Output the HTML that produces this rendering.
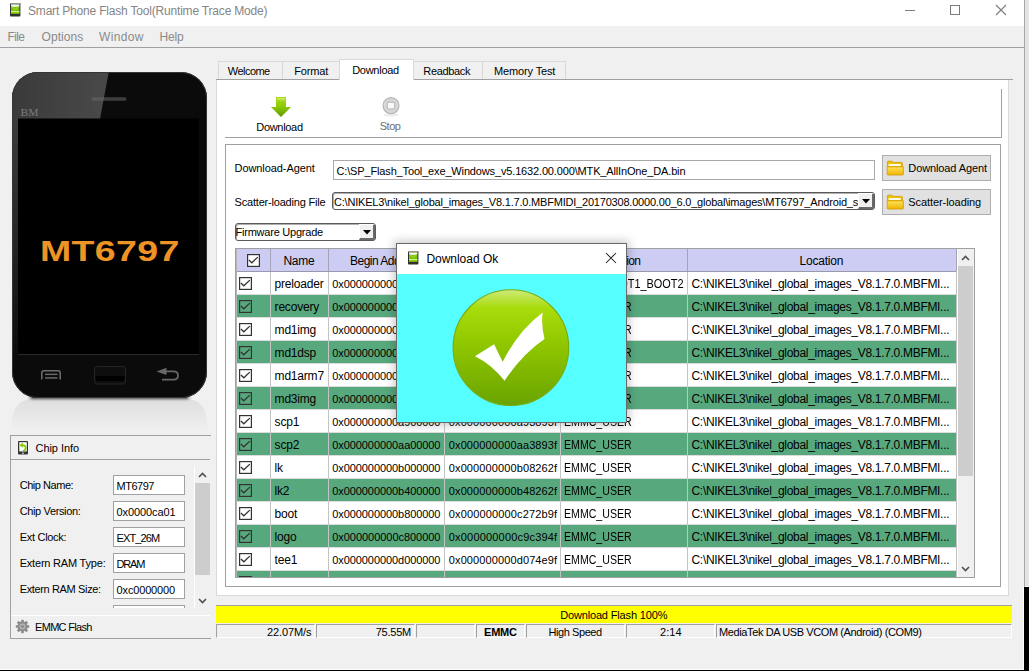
<!DOCTYPE html>
<html><head><meta charset="utf-8">
<style>
*{margin:0;padding:0;box-sizing:border-box}
html,body{width:1029px;height:671px;overflow:hidden;background:#000}
body{position:relative;font-family:"Liberation Sans",sans-serif;font-size:12px;color:#000}
.a{position:absolute}
.t{position:absolute;white-space:nowrap;line-height:14px;font-size:11px}
</style></head><body>
<div class="a" style="left:1024px;top:0px;width:1px;height:587px;background:#a8a8a8"></div>
<div class="a" style="left:1025px;top:0px;width:4px;height:586px;background:#e4e4e4"></div>
<div class="a" style="left:1025px;top:586px;width:4px;height:1px;background:#fff"></div>
<div class="a" style="left:0px;top:669px;width:1024px;height:1px;background:#fff"></div>
<div class="a" style="left:0;top:0;width:1024px;height:669px;background:#f0f0f0;overflow:hidden">
<div class="a" style="left:0px;top:0px;width:1024px;height:26px;background:#fff"></div>
<svg class="a" style="left:10px;top:3px" width="11" height="14" viewBox="0 0 11 14">
  <defs><linearGradient id="ica" x1="0" y1="0" x2="0" y2="1"><stop offset="0" stop-color="#c8c8c8"/><stop offset="1" stop-color="#3a3a3a"/></linearGradient></defs>
  <rect x="0" y="0" width="10.4" height="13.6" rx="0.8" fill="#303030"/>
  <rect x="0" y="0" width="10.4" height="1.4" fill="url(#ica)"/>
  <rect x="1" y="1.4" width="8.4" height="9.2" fill="#7cc400"/>
  <path d="M1 1.4 L9.4 1.4 L9.4 3 Q5.2 5.2 1 3 Z" fill="#f6f6f6"/>
  <path d="M1.2 3.6 L5.2 6.4 L9.2 3.6" stroke="#a6dc50" stroke-width="0.8" fill="none"/>
  <rect x="1" y="8.1" width="8.4" height="0.9" fill="#d8f0b0"/>
  <rect x="1" y="9" width="8.4" height="1.6" fill="#88d000"/>
</svg>
<div class="t" style="left:28.00px;top:4.00px;font-size:12px;letter-spacing:-0.187px;color:#858585">Smart Phone Flash Tool(Runtime Trace Mode)</div>
<div class="a" style="left:905px;top:10px;width:10px;height:1px;background:#7c7c7c"></div>
<div class="a" style="left:950px;top:5px;width:10px;height:10px;border:1px solid #7c7c7c"></div>
<svg class="a" style="left:995px;top:4px" width="12" height="12" viewBox="0 0 12 12"><path d="M1 1L11 11M11 1L1 11" stroke="#7c7c7c" stroke-width="1.1"/></svg>
<div class="a" style="left:0px;top:47px;width:1024px;height:1px;background:#a0a0a0"></div>
<div class="t" style="left:7.50px;top:30.00px;font-size:12px;letter-spacing:-0.612px;color:#8a8a8a">File</div>
<div class="t" style="left:41.50px;top:30.00px;font-size:12px;letter-spacing:0.074px;color:#8a8a8a">Options</div>
<div class="t" style="left:99.00px;top:30.00px;font-size:12px;letter-spacing:0.324px;color:#8a8a8a">Window</div>
<div class="t" style="left:159.40px;top:30.00px;font-size:12px;letter-spacing:-0.127px;color:#8a8a8a">Help</div>
<svg class="a" style="left:0;top:60px" width="216" height="375" viewBox="0 60 216 375">
  <defs>
    <linearGradient id="refl" x1="0" y1="0" x2="0" y2="1">
      <stop offset="0" stop-color="#dedede"/><stop offset="0.7" stop-color="#ebebeb"/><stop offset="1" stop-color="#f0f0f0"/>
    </linearGradient>
    <linearGradient id="shd" x1="0" y1="0" x2="0" y2="1">
      <stop offset="0" stop-color="#808080"/><stop offset="1" stop-color="#d6d6d6" stop-opacity="0"/>
    </linearGradient>
    <linearGradient id="gl" x1="0" y1="0" x2="1" y2="0">
      <stop offset="0" stop-color="#383838"/><stop offset="1" stop-color="#4a4a4a"/>
    </linearGradient>
    <linearGradient id="glv" x1="0" y1="0" x2="0" y2="1">
      <stop offset="0" stop-color="#3c3c3c"/><stop offset="0.5" stop-color="#262626"/><stop offset="1" stop-color="#0b0b0b"/>
    </linearGradient>
    <filter id="blr" x="-20%" y="-200%" width="140%" height="500%"><feGaussianBlur stdDeviation="1.6"/></filter>
    <clipPath id="pc"><rect x="12" y="72" width="195" height="326" rx="26" ry="26"/></clipPath>
  </defs>
  <path d="M38 398 L181 398 Q207 398 207 424 L207 432 L12 432 L12 424 Q12 398 38 398 Z" fill="url(#refl)"/>
  <rect x="30" y="394" width="159" height="5" rx="2.5" fill="#404040" filter="url(#blr)"/>
  <rect x="12" y="72" width="195" height="326" rx="26" ry="26" fill="#0b0b0b"/>
  <g clip-path="url(#pc)">
    <path d="M0 60 L111 60 L100 119 L0 119 Z" fill="url(#gl)"/>
    <rect x="0" y="118" width="18" height="240" fill="url(#glv)"/>
  </g>
  <rect x="12.5" y="72.5" width="194" height="325" rx="25.5" ry="25.5" fill="none" stroke="#363636" stroke-width="1"/>
  <rect x="91.5" y="97.2" width="35" height="3.6" rx="1.8" fill="#6a6a6a" fill-opacity="0.55"/>
  <text x="20.5" y="116" font-family="Liberation Serif" font-size="10.5" fill="#7a7a7a" textLength="18" lengthAdjust="spacingAndGlyphs">BM</text>
  <rect x="18" y="118.5" width="181" height="236" fill="#000"/>
  <rect x="18" y="354" width="181" height="1" fill="#2a2a2a"/>
  <text transform="translate(40,261) scale(1.25,1)" x="0" y="0" font-family="Liberation Sans" font-size="30" font-weight="bold" fill="#ee9426" letter-spacing="0.3">MT6797</text>
  <path d="M41.8 379.4 L41.8 373 Q41.8 370.8 44 370.8 L58 370.8 Q60.2 370.8 60.2 373 L60.2 379.4" fill="none" stroke="#707070" stroke-width="1.5"/>
  <rect x="45" y="373.6" width="12.5" height="1.5" fill="#6a6a6a"/>
  <rect x="45" y="377.2" width="12.5" height="1.5" fill="#6a6a6a"/>
  <rect x="94.5" y="366.5" width="31" height="17.5" rx="3" fill="#0e0e0e" stroke="#262626" stroke-width="1"/>
  <rect x="95.5" y="376" width="29" height="5" fill="#000"/>
  <path d="M164 371.4 L173.5 371.4 Q178 371.4 178 375.5 Q178 379.6 173.5 379.6 L162 379.6" fill="none" stroke="#686868" stroke-width="1.8"/>
  <path d="M156.5 371.4 L166.5 367.8 L166.5 375 Z" fill="#686868"/>
</svg>
<div class="a" style="left:10px;top:435px;width:201px;height:204px;border:1px solid #a0a0a0;border-right:none"></div>
<div class="a" style="left:11px;top:459px;width:199px;height:1px;background:#a0a0a0"></div>
<svg class="a" style="left:18px;top:441px" width="10" height="14" viewBox="0 0 10 14">
  <rect x="0" y="0" width="10" height="13.6" rx="1" fill="#353535"/>
  <rect x="1.3" y="1.2" width="7.5" height="9.2" fill="#fff"/>
  <path d="M4 4.2 Q7.9 4.2 7.7 7.2 Q7.5 9.3 5 9.8" stroke="#82c800" stroke-width="1.8" fill="none"/>
  <path d="M1.5 4.2 L4.8 1.6 L4.8 6.8 Z" fill="#82c800"/>
  <rect x="4" y="11.7" width="2" height="1" fill="#ddd"/>
</svg>
<div class="t" style="left:35.50px;top:441.00px;font-size:11px;letter-spacing:-0.053px">Chip Info</div>
<div class="a" style="left:11px;top:460px;width:199px;height:148px;overflow:hidden">
<div class="t" style="left:8.70px;top:17.60px;font-size:11px;letter-spacing:-0.464px">Chip Name:</div>
<div class="a" style="left:102px;top:15px;width:72px;height:20px;background:#fff;border:1px solid #a0a0a0"></div>
<div class="t" style="left:105.60px;top:19.00px;font-size:11px;letter-spacing:-0.511px">MT6797</div>
<div class="t" style="left:8.70px;top:43.60px;font-size:11px;letter-spacing:-0.369px">Chip Version:</div>
<div class="a" style="left:102px;top:41px;width:72px;height:20px;background:#fff;border:1px solid #a0a0a0"></div>
<div class="t" style="left:105.60px;top:45.00px;font-size:11px;letter-spacing:-0.093px">0x0000ca01</div>
<div class="t" style="left:8.70px;top:69.60px;font-size:11px;letter-spacing:-0.290px">Ext Clock:</div>
<div class="a" style="left:102px;top:67px;width:72px;height:20px;background:#fff;border:1px solid #a0a0a0"></div>
<div class="t" style="left:105.60px;top:71.00px;font-size:11px;letter-spacing:-0.885px">EXT_26M</div>
<div class="t" style="left:8.70px;top:95.60px;font-size:11px;letter-spacing:-0.203px">Extern RAM Type:</div>
<div class="a" style="left:102px;top:93px;width:72px;height:20px;background:#fff;border:1px solid #a0a0a0"></div>
<div class="t" style="left:105.60px;top:97.00px;font-size:11px;letter-spacing:-1.229px">DRAM</div>
<div class="t" style="left:8.70px;top:121.60px;font-size:11px;letter-spacing:-0.360px">Extern RAM Size:</div>
<div class="a" style="left:102px;top:119px;width:72px;height:20px;background:#fff;border:1px solid #a0a0a0"></div>
<div class="t" style="left:105.60px;top:123.00px;font-size:11px;letter-spacing:-0.160px">0xc0000000</div>
<div class="a" style="left:102px;top:145px;width:72px;height:20px;background:#fff;border:1px solid #a0a0a0"></div>
<div class="a" style="left:183px;top:6px;width:1px;height:142px;background:#fff"></div>
<div class="a" style="left:184px;top:23px;width:15px;height:92px;background:#cdcdcd"></div>
<svg class="a" style="left:187px;top:12px" width="9" height="6" viewBox="0 0 9 6"><path d="M1 5 L4.5 1.5 L8 5" fill="none" stroke="#505050" stroke-width="1.6"/></svg>
<svg class="a" style="left:187px;top:138px" width="9" height="6" viewBox="0 0 9 6"><path d="M1 1 L4.5 4.5 L8 1" fill="none" stroke="#505050" stroke-width="1.6"/></svg>
</div>
<div class="a" style="left:11px;top:615px;width:199px;height:1px;background:#fff"></div>
<svg class="a" style="left:15px;top:619px" width="15" height="15" viewBox="0 0 15 15">
  <g fill="#8c8c8c">
    <circle cx="7.5" cy="7.5" r="5"/>
    <rect x="6.2" y="0.8" width="2.6" height="13.4"/>
    <rect x="0.8" y="6.2" width="13.4" height="2.6"/>
    <rect x="6.2" y="0.8" width="2.6" height="13.4" transform="rotate(45 7.5 7.5)"/>
    <rect x="6.2" y="0.8" width="2.6" height="13.4" transform="rotate(-45 7.5 7.5)"/>
  </g>
  <circle cx="7.5" cy="7.5" r="3" fill="#b4b4b4"/>
  <circle cx="7.5" cy="7.5" r="1.6" fill="#8c8c8c"/>
</svg>
<div class="t" style="left:35.00px;top:619.50px;font-size:11px;letter-spacing:-0.685px">EMMC Flash</div>
<div class="a" style="left:216px;top:79px;width:793px;height:517px;background:#fff;border:1px solid #d9d9d9"></div>
<div class="a" style="left:216px;top:79px;width:797px;height:1px;background:#a0a0a0"></div>
<div class="a" style="left:218px;top:61px;width:65px;height:18px;background:#f0f0f0;border:1px solid #d9d9d9;border-bottom:none"></div>
<div class="a" style="left:282px;top:61px;width:58px;height:18px;background:#f0f0f0;border:1px solid #d9d9d9;border-bottom:none"></div>
<div class="a" style="left:413px;top:61px;width:70px;height:18px;background:#f0f0f0;border:1px solid #d9d9d9;border-bottom:none"></div>
<div class="a" style="left:482px;top:61px;width:84px;height:18px;background:#f0f0f0;border:1px solid #d9d9d9;border-bottom:none"></div>
<div class="a" style="left:339px;top:59px;width:75px;height:21px;background:#fff;border:1px solid #d9d9d9;border-bottom:none"></div>
<div class="t" style="left:227.80px;top:64.00px;font-size:11px;letter-spacing:-0.541px">Welcome</div>
<div class="t" style="left:294.30px;top:64.00px;font-size:11px;letter-spacing:-0.147px">Format</div>
<div class="t" style="left:352.20px;top:63.00px;font-size:11px;letter-spacing:-0.274px">Download</div>
<div class="t" style="left:423.30px;top:64.00px;font-size:11px;letter-spacing:-0.333px">Readback</div>
<div class="t" style="left:494.00px;top:64.00px;font-size:11px;letter-spacing:-0.135px">Memory Test</div>
<div class="a" style="left:1001px;top:89px;width:1px;height:49px;background:#a0a0a0"></div>
<div class="a" style="left:225px;top:137px;width:777px;height:1px;background:#a0a0a0"></div>
<svg class="a" style="left:270px;top:96px" width="22" height="22" viewBox="0 0 22 22">
  <defs><linearGradient id="ag" x1="0" y1="0" x2="0" y2="1">
    <stop offset="0" stop-color="#a8dc20"/><stop offset="0.5" stop-color="#8cc800"/><stop offset="1" stop-color="#5f9800"/></linearGradient>
  <linearGradient id="ah" x1="0" y1="0" x2="0" y2="1"><stop offset="0" stop-color="#e0f490" stop-opacity="0.8"/><stop offset="1" stop-color="#c0e840" stop-opacity="0"/></linearGradient></defs>
  <path d="M6 1 L16 1 L16 11 L21 11 L11 21 L1 11 L6 11 Z" fill="url(#ag)"/>
  <rect x="7" y="2" width="8" height="4" fill="url(#ah)"/>
</svg>
<div class="t" style="left:256.30px;top:120.00px;font-size:11px;letter-spacing:-0.317px">Download</div>
<svg class="a" style="left:381px;top:96px" width="20" height="22" viewBox="0 0 20 22">
  <ellipse cx="10" cy="19" rx="8" ry="1.5" fill="#ececec"/>
  <circle cx="10" cy="9.6" r="8" fill="#d2d2d2" stroke="#b4b4b4" stroke-width="1.1"/>
  <circle cx="10" cy="9.6" r="6.6" fill="none" stroke="#dcdcdc" stroke-width="0.9"/>
  <rect x="6.6" y="6.4" width="6.8" height="6.4" fill="#fafafa" stroke="#bababa" stroke-width="0.9"/>
</svg>
<div class="t" style="left:379.70px;top:119.00px;font-size:11px;letter-spacing:-0.476px;color:#6d6d6d">Stop</div>
<div class="a" style="left:225px;top:144px;width:776px;height:443px;border:1px solid #a0a0a0"></div>
<div class="t" style="left:234.60px;top:161.00px;font-size:11px;letter-spacing:-0.087px">Download-Agent</div>
<div class="a" style="left:333px;top:160px;width:542px;height:20px;border:1px solid #a8a8a8;background:#fff"></div>
<div class="t" style="left:336.50px;top:164.00px;font-size:11px;letter-spacing:-0.150px">C:\SP_Flash_Tool_exe_Windows_v5.1632.00.000\MTK_AllInOne_DA.bin</div>
<div class="t" style="left:234.60px;top:195.00px;font-size:11px;letter-spacing:-0.198px">Scatter-loading File</div>
<div class="a" style="left:332px;top:192px;width:543px;height:18px;border:1px solid #5a5a5a;border-radius:3px;background:#fff;box-shadow:inset 1px 1px 0 #b0b0b0"></div>
<div class="a" style="left:334px;top:194px;width:525px;height:14px;overflow:hidden">
<div class="t" style="left:0.00px;top:1.00px;font-size:11px;letter-spacing:-0.200px">C:\NIKEL3\nikel_global_images_V8.1.7.0.MBFMIDI_20170308.0000.00_6.0_global\images\MT6797_Android_scatter.txt</div>
</div>
<div class="a" style="left:858px;top:193px;width:16px;height:16px;background:#f0f0f0;border-left:1px solid #fff;border-top:1px solid #fff;border-right:2px solid #6a6a6a;border-bottom:2px solid #6a6a6a;border-bottom-right-radius:2px"></div>
<svg class="a" style="left:862px;top:199px" width="8" height="5" viewBox="0 0 8 5"><path d="M0 0 L8 0 L4 4.5 Z" fill="#000"/></svg>
<div class="a" style="left:882px;top:155px;width:109px;height:26px;background:#e1e1e1;border:1px solid #adadad"></div>
<div class="a" style="left:882px;top:189px;width:109px;height:26px;background:#e1e1e1;border:1px solid #adadad"></div>
<svg class="a" style="left:886px;top:160px" width="18" height="16" viewBox="0 0 18 16">
  <defs><linearGradient id="fg1" x1="0" y1="0" x2="0" y2="1"><stop offset="0" stop-color="#ffe25a"/><stop offset="1" stop-color="#f0b400"/></linearGradient></defs>
  <path d="M1.4 2 Q1.4 1.2 2.2 1.2 L6 1.2 L7.3 2.4 L15.6 2.4 Q16.4 2.4 16.4 3.2 L16.4 7 L1.4 7 Z" fill="#f2c200" stroke="#cf9a00" stroke-width="0.8"/>
  <rect x="2.6" y="4" width="12" height="2" fill="#fffbe8"/>
  <path d="M1.2 6.8 L17.4 6.8 L17.4 14.2 Q17.4 15 16.6 15 L2 15 Q1.2 15 1.2 14.2 Z" fill="url(#fg1)" stroke="#cf9a00" stroke-width="0.8"/>
</svg>
<svg class="a" style="left:886px;top:194px" width="18" height="16" viewBox="0 0 18 16">
  <defs><linearGradient id="fg2" x1="0" y1="0" x2="0" y2="1"><stop offset="0" stop-color="#ffe25a"/><stop offset="1" stop-color="#f0b400"/></linearGradient></defs>
  <path d="M1.4 2 Q1.4 1.2 2.2 1.2 L6 1.2 L7.3 2.4 L15.6 2.4 Q16.4 2.4 16.4 3.2 L16.4 7 L1.4 7 Z" fill="#f2c200" stroke="#cf9a00" stroke-width="0.8"/>
  <rect x="2.6" y="4" width="12" height="2" fill="#fffbe8"/>
  <path d="M1.2 6.8 L17.4 6.8 L17.4 14.2 Q17.4 15 16.6 15 L2 15 Q1.2 15 1.2 14.2 Z" fill="url(#fg2)" stroke="#cf9a00" stroke-width="0.8"/>
</svg>
<div class="t" style="left:908.30px;top:161.00px;font-size:11px;letter-spacing:-0.109px">Download Agent</div>
<div class="t" style="left:908.30px;top:194.50px;font-size:11px;letter-spacing:-0.078px">Scatter-loading</div>
<div class="a" style="left:235px;top:223px;width:141px;height:18px;border:1px solid #5a5a5a;border-radius:3px;background:#fff;box-shadow:inset 1px 1px 0 #b0b0b0"></div>
<div class="t" style="left:235.50px;top:225.00px;font-size:11px;letter-spacing:-0.226px">Firmware Upgrade</div>
<div class="a" style="left:359px;top:224px;width:16px;height:16px;background:#f0f0f0;border-left:1px solid #fff;border-top:1px solid #fff;border-right:2px solid #6a6a6a;border-bottom:2px solid #6a6a6a;border-bottom-right-radius:2px"></div>
<svg class="a" style="left:362.5px;top:230px" width="8" height="5" viewBox="0 0 8 5"><path d="M0 0 L8 0 L4 4.5 Z" fill="#000"/></svg>
<div class="a" style="left:235px;top:248px;width:740px;height:330px;border:1px solid #a0a0a0;background:#fff"></div>
<div class="a" style="left:236px;top:249px;width:738px;height:328px;overflow:hidden">
<div class="a" style="left:0px;top:22px;width:720px;height:23px;background:#fff;border-top:1px solid #dcdcdc"></div>
<div class="a" style="left:0px;top:45px;width:720px;height:23px;background:#58a87e;border-top:1px solid #dcdcdc"></div>
<div class="a" style="left:0px;top:68px;width:720px;height:23px;background:#fff;border-top:1px solid #dcdcdc"></div>
<div class="a" style="left:0px;top:91px;width:720px;height:23px;background:#58a87e;border-top:1px solid #dcdcdc"></div>
<div class="a" style="left:0px;top:114px;width:720px;height:23px;background:#fff;border-top:1px solid #dcdcdc"></div>
<div class="a" style="left:0px;top:137px;width:720px;height:23px;background:#58a87e;border-top:1px solid #dcdcdc"></div>
<div class="a" style="left:0px;top:160px;width:720px;height:23px;background:#fff;border-top:1px solid #dcdcdc"></div>
<div class="a" style="left:0px;top:183px;width:720px;height:23px;background:#58a87e;border-top:1px solid #dcdcdc"></div>
<div class="a" style="left:0px;top:206px;width:720px;height:23px;background:#fff;border-top:1px solid #dcdcdc"></div>
<div class="a" style="left:0px;top:229px;width:720px;height:23px;background:#58a87e;border-top:1px solid #dcdcdc"></div>
<div class="a" style="left:0px;top:252px;width:720px;height:23px;background:#fff;border-top:1px solid #dcdcdc"></div>
<div class="a" style="left:0px;top:275px;width:720px;height:23px;background:#58a87e;border-top:1px solid #dcdcdc"></div>
<div class="a" style="left:0px;top:298px;width:720px;height:23px;background:#fff;border-top:1px solid #dcdcdc"></div>
<div class="a" style="left:0px;top:321px;width:720px;height:23px;background:#58a87e;border-top:1px solid #dcdcdc"></div>
<div class="a" style="left:34px;top:0px;width:1px;height:330px;background:#c4c4c4"></div>
<div class="a" style="left:92px;top:0px;width:1px;height:330px;background:#c4c4c4"></div>
<div class="a" style="left:208px;top:0px;width:1px;height:330px;background:#c4c4c4"></div>
<div class="a" style="left:324px;top:0px;width:1px;height:330px;background:#c4c4c4"></div>
<div class="a" style="left:451px;top:0px;width:1px;height:330px;background:#c4c4c4"></div>
<div class="a" style="left:720px;top:0px;width:1px;height:330px;background:#c4c4c4"></div>
<div class="a" style="left:0px;top:0px;width:720px;height:23px;background:#cdcdf4;border-bottom:1px solid #9898ae"></div>
<div class="a" style="left:34px;top:0px;width:1px;height:22px;background:#a4a4b8"></div>
<div class="a" style="left:92px;top:0px;width:1px;height:22px;background:#a4a4b8"></div>
<div class="a" style="left:208px;top:0px;width:1px;height:22px;background:#a4a4b8"></div>
<div class="a" style="left:324px;top:0px;width:1px;height:22px;background:#a4a4b8"></div>
<div class="a" style="left:451px;top:0px;width:1px;height:22px;background:#a4a4b8"></div>
<div class="a" style="left:720px;top:0px;width:1px;height:22px;background:#a4a4b8"></div>
<svg class="a" style="left:11px;top:5px" width="13" height="13" viewBox="0 0 13 13"><rect x="0.6" y="0.6" width="11.8" height="11.8" fill="#fff" stroke="#333" stroke-width="1.2"/><path d="M1.9 6 L4.8 8.8 L10.8 3.1" fill="none" stroke="#333" stroke-width="1.3"/></svg>
<div class="t" style="left:47.40px;top:5.00px;font-size:12px;letter-spacing:-0.270px">Name</div>
<div class="t" style="left:114.00px;top:5.00px;font-size:12px;letter-spacing:-0.504px">Begin Address</div>
<div class="t" style="left:234.30px;top:5.00px;font-size:12px;letter-spacing:-0.531px">End Address</div>
<div class="t" style="left:370.00px;top:5.00px;font-size:12px;letter-spacing:-0.605px">Region</div>
<div class="t" style="left:563.60px;top:5.00px;font-size:12px;letter-spacing:-0.224px">Location</div>
<svg class="a" style="left:3px;top:28px" width="13" height="13" viewBox="0 0 13 13"><rect x="0.6" y="0.6" width="11.8" height="11.8" fill="none" stroke="#333" stroke-width="1.2"/><path d="M1.9 6 L4.8 8.8 L10.8 3.1" fill="none" stroke="#333" stroke-width="1.3"/></svg>
<div class="t" style="left:38.60px;top:28.00px;font-size:12px;letter-spacing:-0.200px">preloader</div>
<div class="t" style="left:96.20px;top:28.00px;font-size:11px;letter-spacing:-0.071px">0x0000000000000000</div>
<div class="t" style="left:212.80px;top:28.00px;font-size:11px;letter-spacing:-0.034px">0x000000000003bcd3</div>
<div class="t" style="left:328.30px;top:28.00px;font-size:12px;transform:scaleX(0.9105);transform-origin:0 0">EMMC_BOOT1_BOOT2</div>
<div class="t" style="left:455.50px;top:28.00px;font-size:12px;letter-spacing:-0.307px">C:\NIKEL3\nikel_global_images_V8.1.7.0.MBFMI...</div>
<svg class="a" style="left:3px;top:51px" width="13" height="13" viewBox="0 0 13 13"><rect x="0.6" y="0.6" width="11.8" height="11.8" fill="none" stroke="#333" stroke-width="1.2"/><path d="M1.9 6 L4.8 8.8 L10.8 3.1" fill="none" stroke="#333" stroke-width="1.3"/></svg>
<div class="t" style="left:38.60px;top:51.00px;font-size:12px;letter-spacing:-0.200px">recovery</div>
<div class="t" style="left:96.20px;top:51.00px;font-size:11px;letter-spacing:-0.071px">0x0000000008000000</div>
<div class="t" style="left:212.80px;top:51.00px;font-size:11px;letter-spacing:0.326px">0x0000000008c1f7f7</div>
<div class="t" style="left:328.30px;top:51.00px;font-size:12px;transform:scaleX(0.8829);transform-origin:0 0">EMMC_USER</div>
<div class="t" style="left:455.50px;top:51.00px;font-size:12px;letter-spacing:-0.307px">C:\NIKEL3\nikel_global_images_V8.1.7.0.MBFMI...</div>
<svg class="a" style="left:3px;top:74px" width="13" height="13" viewBox="0 0 13 13"><rect x="0.6" y="0.6" width="11.8" height="11.8" fill="none" stroke="#333" stroke-width="1.2"/><path d="M1.9 6 L4.8 8.8 L10.8 3.1" fill="none" stroke="#333" stroke-width="1.3"/></svg>
<div class="t" style="left:38.60px;top:74.00px;font-size:12px;letter-spacing:-0.200px">md1img</div>
<div class="t" style="left:96.20px;top:74.00px;font-size:11px;letter-spacing:-0.071px">0x0000000009000000</div>
<div class="t" style="left:212.80px;top:74.00px;font-size:11px;letter-spacing:0.182px">0x0000000009c4c9df</div>
<div class="t" style="left:328.30px;top:74.00px;font-size:12px;transform:scaleX(0.8829);transform-origin:0 0">EMMC_USER</div>
<div class="t" style="left:455.50px;top:74.00px;font-size:12px;letter-spacing:-0.307px">C:\NIKEL3\nikel_global_images_V8.1.7.0.MBFMI...</div>
<svg class="a" style="left:3px;top:97px" width="13" height="13" viewBox="0 0 13 13"><rect x="0.6" y="0.6" width="11.8" height="11.8" fill="none" stroke="#333" stroke-width="1.2"/><path d="M1.9 6 L4.8 8.8 L10.8 3.1" fill="none" stroke="#333" stroke-width="1.3"/></svg>
<div class="t" style="left:38.60px;top:97.00px;font-size:12px;letter-spacing:-0.200px">md1dsp</div>
<div class="t" style="left:96.20px;top:97.00px;font-size:11px;letter-spacing:-0.071px">0x000000000a000000</div>
<div class="t" style="left:212.80px;top:97.00px;font-size:11px;letter-spacing:0.109px">0x000000000a3bb8ef</div>
<div class="t" style="left:328.30px;top:97.00px;font-size:12px;transform:scaleX(0.8829);transform-origin:0 0">EMMC_USER</div>
<div class="t" style="left:455.50px;top:97.00px;font-size:12px;letter-spacing:-0.307px">C:\NIKEL3\nikel_global_images_V8.1.7.0.MBFMI...</div>
<svg class="a" style="left:3px;top:120px" width="13" height="13" viewBox="0 0 13 13"><rect x="0.6" y="0.6" width="11.8" height="11.8" fill="none" stroke="#333" stroke-width="1.2"/><path d="M1.9 6 L4.8 8.8 L10.8 3.1" fill="none" stroke="#333" stroke-width="1.3"/></svg>
<div class="t" style="left:38.60px;top:120.00px;font-size:12px;letter-spacing:-0.200px">md1arm7</div>
<div class="t" style="left:96.20px;top:120.00px;font-size:11px;letter-spacing:-0.071px">0x000000000a400000</div>
<div class="t" style="left:212.80px;top:120.00px;font-size:11px;letter-spacing:0.146px">0x000000000a43a7cf</div>
<div class="t" style="left:328.30px;top:120.00px;font-size:12px;transform:scaleX(0.8829);transform-origin:0 0">EMMC_USER</div>
<div class="t" style="left:455.50px;top:120.00px;font-size:12px;letter-spacing:-0.307px">C:\NIKEL3\nikel_global_images_V8.1.7.0.MBFMI...</div>
<svg class="a" style="left:3px;top:143px" width="13" height="13" viewBox="0 0 13 13"><rect x="0.6" y="0.6" width="11.8" height="11.8" fill="none" stroke="#333" stroke-width="1.2"/><path d="M1.9 6 L4.8 8.8 L10.8 3.1" fill="none" stroke="#333" stroke-width="1.3"/></svg>
<div class="t" style="left:38.60px;top:143.00px;font-size:12px;letter-spacing:-0.200px">md3img</div>
<div class="t" style="left:96.20px;top:143.00px;font-size:11px;letter-spacing:-0.071px">0x000000000a500000</div>
<div class="t" style="left:212.80px;top:143.00px;font-size:11px;letter-spacing:0.290px">0x000000000a8f7b1f</div>
<div class="t" style="left:328.30px;top:143.00px;font-size:12px;transform:scaleX(0.8829);transform-origin:0 0">EMMC_USER</div>
<div class="t" style="left:455.50px;top:143.00px;font-size:12px;letter-spacing:-0.307px">C:\NIKEL3\nikel_global_images_V8.1.7.0.MBFMI...</div>
<svg class="a" style="left:3px;top:166px" width="13" height="13" viewBox="0 0 13 13"><rect x="0.6" y="0.6" width="11.8" height="11.8" fill="none" stroke="#333" stroke-width="1.2"/><path d="M1.9 6 L4.8 8.8 L10.8 3.1" fill="none" stroke="#333" stroke-width="1.3"/></svg>
<div class="t" style="left:38.60px;top:166.00px;font-size:12px;letter-spacing:-0.200px">scp1</div>
<div class="t" style="left:96.20px;top:166.00px;font-size:11px;letter-spacing:-0.071px">0x000000000a900000</div>
<div class="t" style="left:212.80px;top:166.00px;font-size:11px;letter-spacing:0.109px">0x000000000a93893f</div>
<div class="t" style="left:328.30px;top:166.00px;font-size:12px;transform:scaleX(0.8829);transform-origin:0 0">EMMC_USER</div>
<div class="t" style="left:455.50px;top:166.00px;font-size:12px;letter-spacing:-0.307px">C:\NIKEL3\nikel_global_images_V8.1.7.0.MBFMI...</div>
<svg class="a" style="left:3px;top:189px" width="13" height="13" viewBox="0 0 13 13"><rect x="0.6" y="0.6" width="11.8" height="11.8" fill="none" stroke="#333" stroke-width="1.2"/><path d="M1.9 6 L4.8 8.8 L10.8 3.1" fill="none" stroke="#333" stroke-width="1.3"/></svg>
<div class="t" style="left:38.60px;top:189.00px;font-size:12px;letter-spacing:-0.200px">scp2</div>
<div class="t" style="left:96.20px;top:189.00px;font-size:11px;letter-spacing:-0.071px">0x000000000aa00000</div>
<div class="t" style="left:212.80px;top:189.00px;font-size:11px;letter-spacing:0.109px">0x000000000aa3893f</div>
<div class="t" style="left:328.30px;top:189.00px;font-size:12px;transform:scaleX(0.8829);transform-origin:0 0">EMMC_USER</div>
<div class="t" style="left:455.50px;top:189.00px;font-size:12px;letter-spacing:-0.307px">C:\NIKEL3\nikel_global_images_V8.1.7.0.MBFMI...</div>
<svg class="a" style="left:3px;top:212px" width="13" height="13" viewBox="0 0 13 13"><rect x="0.6" y="0.6" width="11.8" height="11.8" fill="none" stroke="#333" stroke-width="1.2"/><path d="M1.9 6 L4.8 8.8 L10.8 3.1" fill="none" stroke="#333" stroke-width="1.3"/></svg>
<div class="t" style="left:38.60px;top:212.00px;font-size:12px;letter-spacing:-0.200px">lk</div>
<div class="t" style="left:96.20px;top:212.00px;font-size:11px;letter-spacing:-0.071px">0x000000000b000000</div>
<div class="t" style="left:212.80px;top:212.00px;font-size:11px;letter-spacing:0.109px">0x000000000b08262f</div>
<div class="t" style="left:328.30px;top:212.00px;font-size:12px;transform:scaleX(0.8829);transform-origin:0 0">EMMC_USER</div>
<div class="t" style="left:455.50px;top:212.00px;font-size:12px;letter-spacing:-0.307px">C:\NIKEL3\nikel_global_images_V8.1.7.0.MBFMI...</div>
<svg class="a" style="left:3px;top:235px" width="13" height="13" viewBox="0 0 13 13"><rect x="0.6" y="0.6" width="11.8" height="11.8" fill="none" stroke="#333" stroke-width="1.2"/><path d="M1.9 6 L4.8 8.8 L10.8 3.1" fill="none" stroke="#333" stroke-width="1.3"/></svg>
<div class="t" style="left:38.60px;top:235.00px;font-size:12px;letter-spacing:-0.200px">lk2</div>
<div class="t" style="left:96.20px;top:235.00px;font-size:11px;letter-spacing:-0.071px">0x000000000b400000</div>
<div class="t" style="left:212.80px;top:235.00px;font-size:11px;letter-spacing:0.109px">0x000000000b48262f</div>
<div class="t" style="left:328.30px;top:235.00px;font-size:12px;transform:scaleX(0.8829);transform-origin:0 0">EMMC_USER</div>
<div class="t" style="left:455.50px;top:235.00px;font-size:12px;letter-spacing:-0.307px">C:\NIKEL3\nikel_global_images_V8.1.7.0.MBFMI...</div>
<svg class="a" style="left:3px;top:258px" width="13" height="13" viewBox="0 0 13 13"><rect x="0.6" y="0.6" width="11.8" height="11.8" fill="none" stroke="#333" stroke-width="1.2"/><path d="M1.9 6 L4.8 8.8 L10.8 3.1" fill="none" stroke="#333" stroke-width="1.3"/></svg>
<div class="t" style="left:38.60px;top:258.00px;font-size:12px;letter-spacing:-0.200px">boot</div>
<div class="t" style="left:96.20px;top:258.00px;font-size:11px;letter-spacing:-0.071px">0x000000000b800000</div>
<div class="t" style="left:212.80px;top:258.00px;font-size:11px;letter-spacing:0.146px">0x000000000c272b9f</div>
<div class="t" style="left:328.30px;top:258.00px;font-size:12px;transform:scaleX(0.8829);transform-origin:0 0">EMMC_USER</div>
<div class="t" style="left:455.50px;top:258.00px;font-size:12px;letter-spacing:-0.307px">C:\NIKEL3\nikel_global_images_V8.1.7.0.MBFMI...</div>
<svg class="a" style="left:3px;top:281px" width="13" height="13" viewBox="0 0 13 13"><rect x="0.6" y="0.6" width="11.8" height="11.8" fill="none" stroke="#333" stroke-width="1.2"/><path d="M1.9 6 L4.8 8.8 L10.8 3.1" fill="none" stroke="#333" stroke-width="1.3"/></svg>
<div class="t" style="left:38.60px;top:281.00px;font-size:12px;letter-spacing:-0.200px">logo</div>
<div class="t" style="left:96.20px;top:281.00px;font-size:11px;letter-spacing:-0.034px">0x000000000c800000</div>
<div class="t" style="left:212.80px;top:281.00px;font-size:11px;letter-spacing:0.182px">0x000000000c9c394f</div>
<div class="t" style="left:328.30px;top:281.00px;font-size:12px;transform:scaleX(0.8829);transform-origin:0 0">EMMC_USER</div>
<div class="t" style="left:455.50px;top:281.00px;font-size:12px;letter-spacing:-0.307px">C:\NIKEL3\nikel_global_images_V8.1.7.0.MBFMI...</div>
<svg class="a" style="left:3px;top:304px" width="13" height="13" viewBox="0 0 13 13"><rect x="0.6" y="0.6" width="11.8" height="11.8" fill="none" stroke="#333" stroke-width="1.2"/><path d="M1.9 6 L4.8 8.8 L10.8 3.1" fill="none" stroke="#333" stroke-width="1.3"/></svg>
<div class="t" style="left:38.60px;top:304.00px;font-size:12px;letter-spacing:-0.200px">tee1</div>
<div class="t" style="left:96.20px;top:304.00px;font-size:11px;letter-spacing:-0.071px">0x000000000d000000</div>
<div class="t" style="left:212.80px;top:304.00px;font-size:11px;letter-spacing:0.109px">0x000000000d074e9f</div>
<div class="t" style="left:328.30px;top:304.00px;font-size:12px;transform:scaleX(0.8829);transform-origin:0 0">EMMC_USER</div>
<div class="t" style="left:455.50px;top:304.00px;font-size:12px;letter-spacing:-0.307px">C:\NIKEL3\nikel_global_images_V8.1.7.0.MBFMI...</div>
<svg class="a" style="left:3px;top:327px" width="13" height="13" viewBox="0 0 13 13"><rect x="0.6" y="0.6" width="11.8" height="11.8" fill="none" stroke="#333" stroke-width="1.2"/><path d="M1.9 6 L4.8 8.8 L10.8 3.1" fill="none" stroke="#333" stroke-width="1.3"/></svg>
<div class="t" style="left:38.60px;top:327.00px;font-size:12px;letter-spacing:-0.200px">tee2</div>
<div class="t" style="left:96.20px;top:327.00px;font-size:11px;letter-spacing:-0.071px">0x000000000d800000</div>
<div class="t" style="left:212.80px;top:327.00px;font-size:11px;letter-spacing:0.109px">0x000000000d874e9f</div>
<div class="t" style="left:328.30px;top:327.00px;font-size:12px;transform:scaleX(0.8829);transform-origin:0 0">EMMC_USER</div>
<div class="t" style="left:455.50px;top:327.00px;font-size:12px;letter-spacing:-0.307px">C:\NIKEL3\nikel_global_images_V8.1.7.0.MBFMI...</div>
<div class="a" style="left:721px;top:0px;width:17px;height:330px;background:#f0f0f0;border-left:1px solid #fff"></div>
<div class="a" style="left:0px;top:0px;width:1px;height:330px;background:#b4b4b4"></div>
<div class="a" style="left:722px;top:17px;width:15px;height:210px;background:#cdcdcd"></div>
<svg class="a" style="left:725px;top:6px" width="9" height="6" viewBox="0 0 9 6"><path d="M1 5 L4.5 1.5 L8 5" fill="none" stroke="#505050" stroke-width="1.6"/></svg>
<svg class="a" style="left:725px;top:317px" width="9" height="6" viewBox="0 0 9 6"><path d="M1 1 L4.5 4.5 L8 1" fill="none" stroke="#505050" stroke-width="1.6"/></svg>
</div>
<div class="a" style="left:396px;top:243px;width:231px;height:180px;background:#55ffff;border:1px solid #6a6a6a;box-shadow:0 0 9px 2px rgba(0,0,0,0.22)"></div>
<div class="a" style="left:397px;top:244px;width:229px;height:30px;background:#fff"></div>
<svg class="a" style="left:408px;top:251px" width="11" height="14" viewBox="0 0 11 14">
  <defs><linearGradient id="icb" x1="0" y1="0" x2="0" y2="1"><stop offset="0" stop-color="#c8c8c8"/><stop offset="1" stop-color="#3a3a3a"/></linearGradient></defs>
  <rect x="0" y="0" width="10.4" height="13.6" rx="0.8" fill="#303030"/>
  <rect x="0" y="0" width="10.4" height="1.4" fill="url(#icb)"/>
  <rect x="1" y="1.4" width="8.4" height="9.2" fill="#7cc400"/>
  <path d="M1 1.4 L9.4 1.4 L9.4 3 Q5.2 5.2 1 3 Z" fill="#f6f6f6"/>
  <path d="M1.2 3.6 L5.2 6.4 L9.2 3.6" stroke="#a6dc50" stroke-width="0.8" fill="none"/>
  <rect x="1" y="8.1" width="8.4" height="0.9" fill="#d8f0b0"/>
  <rect x="1" y="9" width="8.4" height="1.6" fill="#88d000"/>
</svg>
<div class="t" style="left:426.40px;top:252.00px;font-size:12px;letter-spacing:-0.024px">Download Ok</div>
<svg class="a" style="left:605px;top:252px" width="12" height="12" viewBox="0 0 12 12"><path d="M1 1L11 11M11 1L1 11" stroke="#222" stroke-width="1.05"/></svg>
<svg class="a" style="left:450px;top:288px" width="122" height="122" viewBox="0 0 671 671">
  <defs>
    <linearGradient id="cg" x1="0" y1="0" x2="0" y2="1">
      <stop offset="0" stop-color="#cdea78"/>
      <stop offset="0.16" stop-color="#a8dc0a"/>
      <stop offset="0.45" stop-color="#92c800"/>
      <stop offset="1" stop-color="#6aa400"/>
    </linearGradient>
  </defs>
  <circle cx="335" cy="328" r="318" fill="url(#cg)" stroke="#7aaa10" stroke-width="6"/>
  <path d="M137,375 L243,310 Q265,360 290,405 Q380,230 510,135 Q500,200 520,280 Q400,360 300,510 Q230,420 137,375 Z" fill="#fff"/>
</svg>
<div class="a" style="left:216px;top:605px;width:796px;height:18px;background:#ffff00;border-top:1px solid #a0a0a0"></div>
<div class="t" style="left:560.15px;top:608.00px;font-size:11px;letter-spacing:-0.154px">Download Flash 100%</div>
<div class="a" style="left:216px;top:624px;width:99px;height:14px;border-left:1px solid #a0a0a0;border-top:1px solid #a0a0a0;border-right:1px solid #fff;border-bottom:1px solid #fff"></div>
<div class="a" style="left:316px;top:624px;width:99px;height:14px;border-left:1px solid #a0a0a0;border-top:1px solid #a0a0a0;border-right:1px solid #fff;border-bottom:1px solid #fff"></div>
<div class="a" style="left:416px;top:624px;width:59px;height:14px;border-left:1px solid #a0a0a0;border-top:1px solid #a0a0a0;border-right:1px solid #fff;border-bottom:1px solid #fff"></div>
<div class="a" style="left:476px;top:624px;width:49px;height:14px;border-left:1px solid #a0a0a0;border-top:1px solid #a0a0a0;border-right:1px solid #fff;border-bottom:1px solid #fff"></div>
<div class="a" style="left:526px;top:624px;width:99px;height:14px;border-left:1px solid #a0a0a0;border-top:1px solid #a0a0a0;border-right:1px solid #fff;border-bottom:1px solid #fff"></div>
<div class="a" style="left:626px;top:624px;width:89px;height:14px;border-left:1px solid #a0a0a0;border-top:1px solid #a0a0a0;border-right:1px solid #fff;border-bottom:1px solid #fff"></div>
<div class="a" style="left:716px;top:624px;width:296px;height:14px;border-left:1px solid #a0a0a0;border-top:1px solid #a0a0a0;border-right:1px solid #fff;border-bottom:1px solid #fff"></div>
<div class="t" style="left:267.10px;top:625.00px;font-size:11px;letter-spacing:-0.121px">22.07M/s</div>
<div class="t" style="left:375.70px;top:625.00px;font-size:11px;letter-spacing:-0.238px">75.55M</div>
<div class="t" style="left:484.00px;top:625.00px;font-size:11px;letter-spacing:-0.202px;font-weight:bold">EMMC</div>
<div class="t" style="left:548.40px;top:625.00px;font-size:11px;letter-spacing:-0.410px">High Speed</div>
<div class="t" style="left:659.90px;top:625.00px;font-size:11px;letter-spacing:0.130px">2:14</div>
<div class="t" style="left:719.10px;top:625.00px;font-size:11px;letter-spacing:-0.397px">MediaTek DA USB VCOM (Android) (COM9)</div>
</div>
<div class="a" style="left:1023px;top:587px;width:1px;height:83px;background:#fff"></div>
</body></html>
